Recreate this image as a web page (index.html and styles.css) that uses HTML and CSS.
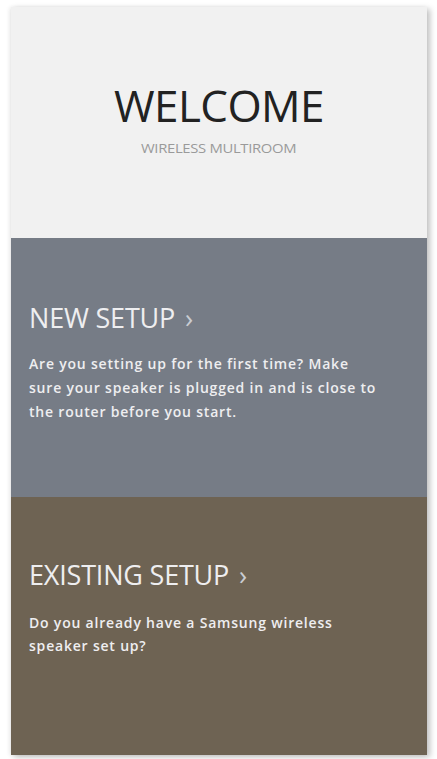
FILE: index.html
```html
<!DOCTYPE html>
<html lang="en">
<head>
    <meta charset="UTF-8">
    <meta name="viewport" content="width=device-width, initial-scale=1.0">
    <title>Wireless Multiroom</title>
    <link rel="stylesheet" href="styles.css">
</head>
<body>

    <div class="screen">
        <header class="welcome">
            <h1>WELCOME</h1>
            <p class="subtitle">WIRELESS MULTIROOM</p>
        </header>

        <a class="option new-setup" href="#">
            <h2>NEW SETUP <span class="chevron">&#x203A;</span></h2>
            <p>Are you setting up for the first time? Make sure your speaker is plugged in and is close to the router before you start.</p>
        </a>

        <a class="option existing-setup" href="#">
            <h2>EXISTING SETUP <span class="chevron">&#x203A;</span></h2>
            <p>Do you already have a Samsung wireless speaker set up?</p>
        </a>
    </div>

</body>
</html>
```

FILE: styles.css
```css
body {
    margin: 0;
    padding: 7px 10px 4px 11px;
    background-color: #fff;
    font-family: "Open Sans", "Noto Sans", sans-serif;
}
.screen {
    display: flex;
    flex-direction: column;
    height: 748px;
    box-shadow: 3px 2px 6px rgba(0, 0, 0, 0.25), -2px 0 4px rgba(0, 0, 0, 0.06);
}
.welcome {
    height: 231px;
    background-color: #f1f1f1;
    display: flex;
    flex-direction: column;
    align-items: center;
    padding-top: 70px;
    box-sizing: border-box;
}
.welcome h1 {
    margin: 0;
    font-weight: 500;
    font-size: 44px;
    line-height: 56px;
    color: #222;
    letter-spacing: -0.6px;
}
.subtitle {
    margin: 6px 0 0;
    font-size: 13.5px;
    color: #9a9a9a;
    letter-spacing: -0.3px;
    transform: scaleX(1.1);
}
.option {
    display: block;
    height: 259px;
    box-sizing: border-box;
    padding: 62px 18px 0;
    text-decoration: none;
    color: #eeeef0;
}
.new-setup {
    background-color: #767c86;
}
.existing-setup {
    background-color: #6e6353;
    height: 258px;
    padding-top: 60px;
}
.option h2 {
    margin: 0;
    font-weight: 400;
    font-size: 27px;
    line-height: 36px;
    letter-spacing: -0.2px;
}
.chevron {
    margin-left: 3px;
    color: #c9ccd2;
}
.option p {
    margin: 16px 0 0;
    max-width: 350px;
    font-size: 14px;
    font-weight: 600;
    line-height: 24px;
    letter-spacing: 0.8px;
}
.existing-setup p {
    margin-top: 18px;
    line-height: 23px;
}
```
